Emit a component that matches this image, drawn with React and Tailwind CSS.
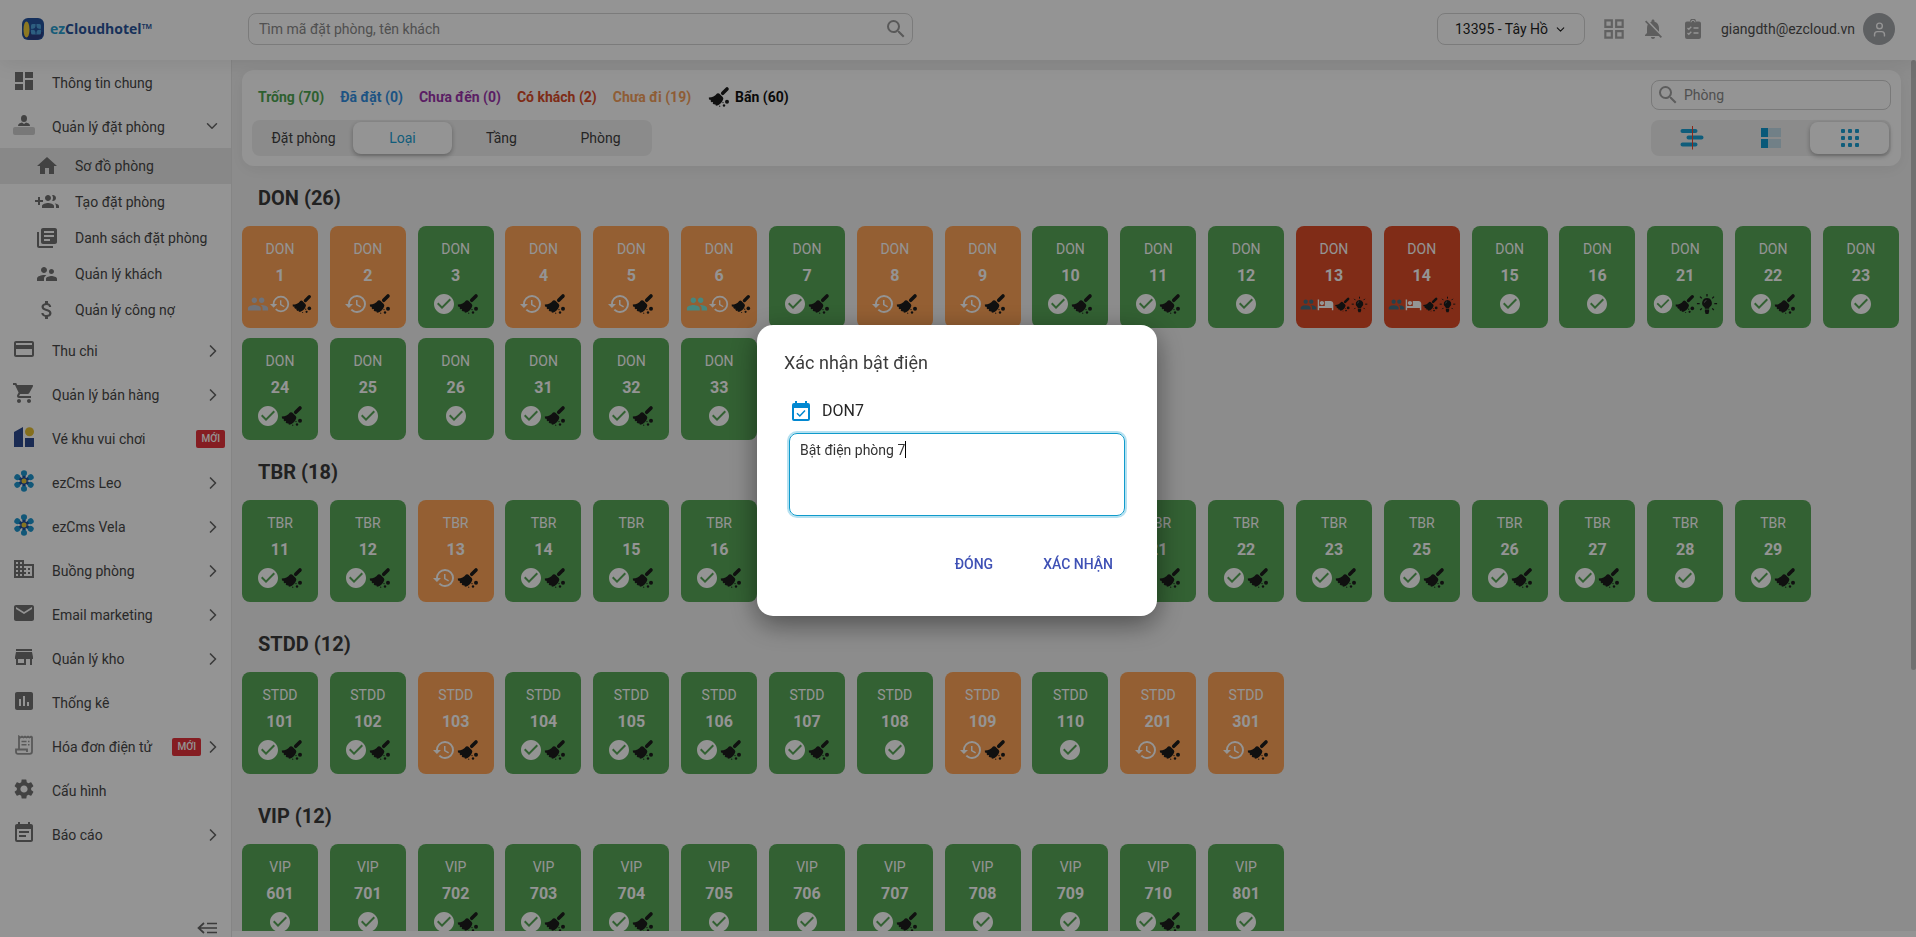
import { useState } from "react";
import {
  MdDashboard,
  MdHome,
  MdLibraryBooks,
  MdSupervisorAccount,
  MdAttachMoney,
  MdCreditCard,
  MdShoppingCart,
  MdBusiness,
  MdEmail,
  MdStore,
  MdAssessment,
  MdSettings,
  MdEventNote,
  MdSearch,
  MdNotificationsOff,
  MdOutlineGridView,
  MdHistory,
  MdCheckCircle,
  MdHotel,
} from "react-icons/md";
import { ChevronDown, ChevronRight, User } from "lucide-react";

function Logo() {
  return (
    <svg width="22" height="22" viewBox="0 0 22 22" aria-hidden="true">
      <rect x="0" y="0" width="22" height="22" rx="6" fill="#25549f" />
      <path d="M2 19C7 23 16 23 20 19L21 14H1z" fill="#2b3f86" />
      <ellipse cx="4.5" cy="11.500" rx="3" ry="8" fill="#f2cf3c" />
      <rect x="9" y="6" width="10" height="10.500" rx="1.500" fill="#4fa3dc" />
      <path d="M14 6v10.500M9 11.300h10" stroke="#25549f" strokeWidth="1" />
      <path d="M14 8l1.200 2.100 2.300 1.200-2.300 1.200L14 14.600l-1.200-2.100-2.300-1.200 2.300-1.200z" fill="#25549f" />
    </svg>
  );
}

function Reception() {
  return (
    <svg width="22" height="22" viewBox="0 0 22 22" aria-hidden="true">
      <ellipse cx="11" cy="4.500" rx="3" ry="3.500" fill="#737373" />
      <path d="M5 12c0-2.500 2-3 4-3.500l2 1.500 2-1.500c2 .5 4 1 4 3.500z" fill="#737373" />
      <rect x="0" y="13" width="22" height="8" rx="2" fill="#cfcfcf" />
    </svg>
  );
}

function GroupAdd() {
  return (
    <svg width="24" height="24" viewBox="0 0 24 24" fill="currentColor" aria-hidden="true">
      <path d="M8 10H5V7H3v3H0v2h3v3h2v-3h3v-2zm10 1c1.660 0 2.990-1.340 2.990-3S19.660 5 18 5c-.32 0-.63.05-.91.14.57.81.9 1.790.9 2.860s-.34 2.040-.9 2.860c.28.09.59.14.91.14zm-5 0c1.660 0 2.990-1.340 2.990-3S14.660 5 13 5c-1.660 0-3 1.340-3 3s1.340 3 3 3zm6.620 2.160c.83.73 1.380 1.660 1.380 2.840v2h3v-2c0-1.540-2.370-2.490-4.380-2.840zM13 13c-2 0-6 1-6 3v2h12v-2c0-2-4-3-6-3z" />
    </svg>
  );
}

function Tickets() {
  return (
    <svg width="20" height="20" viewBox="0 0 20 20" aria-hidden="true">
      <path d="M0 5L9 0v20H0z" fill="#2d4a8f" />
      <rect x="11" y="11" width="9" height="9" fill="#2d4a8f" />
      <circle cx="15.500" cy="4.700" r="4.500" fill="#e5c033" />
    </svg>
  );
}

function Flower() {
  return (
    <svg width="20" height="22" viewBox="0 0 20 22" aria-hidden="true">
      {[0, 60, 120, 180, 240, 300].map((a) => (
        <g key={a} transform={`rotate(${a} 10 11)`}>
          <path d="M10 9L8 5.500A3 3 0 0 1 7 3a3 2.700 0 0 1 6 0 3 3 0 0 1-1 2.500z" fill="#1e96cf" />
          <path d="M10 11L8.300 6.500a2 1.500 0 0 1 3.400 0z" fill="#1f4fa0" />
        </g>
      ))}
      <circle cx="10" cy="11" r="3.700" fill="#1f4fa0" />
      <circle cx="10" cy="11" r="2.500" fill="#e8c93a" />
    </svg>
  );
}

function Receipt() {
  return (
    <svg width="18" height="20" viewBox="0 0 18 20" fill="none" stroke="#9a9a9a" strokeWidth="1.800" aria-hidden="true">
      <path d="M4 13.500V1.500l1.500 1 1.500-1 1.500 1 1.500-1 1.500 1 1.500-1 1.500 1 1.500-1 1 .8V16.500a2.300 2.300 0 0 1-2.300 2.300H3A2 2 0 0 1 1 17v-2.500h11V17" />
      <path d="M6.500 6.500h5M6.500 9.800h5M13 6.500h1.500M13 9.800h1.500" strokeWidth="1.500" />
    </svg>
  );
}

function Broom({ size = 24 }) {
  return (
    <svg width={size} height={size} viewBox="-2 -2 24 24" fill="#1c1c1c" className="shrink-0" aria-hidden="true">
      <path d="M13.700 6.300L18 2" stroke="#1c1c1c" strokeWidth="3.600" strokeLinecap="round" />
      <path d="M8 6.600q1.300-.9 2.500.1l3.200 3.200q1.100 1.200.4 2.600C13.200 15.600 11 17.500 7.700 18.800l-1.500-.8.3-1-1.400.5-1.400-1.100.4-1.300-1.600.2-1-1.400.5-1L0 12.600l-.2-2C3.400 10.600 6 9.400 8 6.600z" />
      <circle cx="18" cy="14.800" r="2" />
      <circle cx="15" cy="18.500" r="1.200" />
      <circle cx="10.700" cy="19.200" r=".6" />
      <circle cx="14" cy="15.600" r=".7" />
    </svg>
  );
}

function Bulb({ size }) {
  return (
    <svg width={size} height={size} viewBox="-1 -1 24 24" fill="#1c1c1c" className="shrink-0" aria-hidden="true">
      <path d="M11 4.500a5.400 5.400 0 0 0-3.300 9.600c.7.600 1 1.200 1 2.100h4.600c0-.9.300-1.500 1-2.100A5.400 5.400 0 0 0 11 4.500z" />
      <path d="M8.700 17h4.600v2.500L12.500 22h-3l-.8-2.500z" />
      <path
        d="M11 0v2.700M3.400 3l1.900 1.900M18.600 3l-1.900 1.900M0 10.500h3M19 10.500h3M3.600 17.500l1.700-1.700M18.400 17.500l-1.700-1.700"
        stroke="#1c1c1c"
        strokeWidth="1.400"
      />
      <path d="M8.200 9.500A2.900 2.900 0 0 1 10.500 7" fill="none" stroke="#8a8a8a" strokeWidth=".8" />
    </svg>
  );
}

function Guests({ size, className }) {
  return (
    <svg width={size} height={size} viewBox="0 0 24 24" fill="currentColor" className={`shrink-0 ${className}`} aria-hidden="true">
      <path d="M16 11c1.660 0 2.990-1.340 2.990-3S17.660 5 16 5s-3 1.340-3 3 1.340 3 3 3zm-8 0c1.660 0 2.990-1.340 2.990-3S9.660 5 8 5 5 6.340 5 8s1.340 3 3 3zm0 2c-2.330 0-7 1.170-7 3.500V19h14v-2.500c0-2.330-4.670-3.500-7-3.500zm8 0c-.29 0-.62.02-.97.05 1.160.84 1.970 1.970 1.970 3.450V19h6v-2.500c0-2.330-4.670-3.500-7-3.500z" />
    </svg>
  );
}

function ClipboardList() {
  return (
    <svg width="16" height="20" viewBox="0 0 16 20" aria-hidden="true">
      <path d="M2 2.500h3a3 3 0 0 1 6 0h3a2 2 0 0 1 2 2V18a2 2 0 0 1-2 2H2a2 2 0 0 1-2-2V4.500a2 2 0 0 1 2-2z" fill="#a3a3a3" />
      <path d="M6 3.300a2 2 0 0 1 4 0" fill="none" stroke="#fff" strokeWidth="1" />
      <path d="M2.500 9l1.300 1.300L6.300 7.800M2.500 14l1.300 1.300 2.500-2.500M8.500 9h5M8.500 14h5" fill="none" stroke="#fff" strokeWidth="1.300" />
    </svg>
  );
}

function TimelineIcon() {
  return (
    <svg width="24" height="24" viewBox="0 0 24 24" aria-hidden="true">
      <path d="M2.500 5h13M8.500 11.500h13M2.500 18.500h13" stroke="#1aa0d4" strokeWidth="4" strokeLinecap="round" />
      <path d="M12.500 0v23.500" stroke="#f0452c" strokeWidth="1" />
    </svg>
  );
}

function SplitIcon() {
  return (
    <svg width="20" height="20" viewBox="0 0 20 20" aria-hidden="true">
      <path d="M0 0h7v9H0zM0 11h7v9H0z" fill="#1199d0" />
      <path d="M7 0h13v9H7zM7 11h13v9H7z" fill="#c3dde8" />
    </svg>
  );
}

function DotsIcon() {
  return (
    <svg width="18" height="18" viewBox="0 0 18 18" fill="#1aa0d4" aria-hidden="true">
      {[0, 7, 14].map((y) => [0, 7, 14].map((x) => <rect key={`${x}-${y}`} x={x} y={y} width="4" height="4" rx="1" />))}
    </svg>
  );
}

function CollapseIcon() {
  return (
    <svg width="20" height="12" viewBox="0 0 20 12" fill="none" stroke="#666" strokeWidth="1.700" aria-hidden="true">
      <path d="M7 1L1.500 6 7 11M2 6h18M10 1.500h10M10 10.500h10" />
    </svg>
  );
}

function CalendarCheck() {
  return (
    <svg width="18" height="20" viewBox="0 0 18 20" aria-hidden="true">
      <path
        d="M3 0h2v2h8V0h2v2h1a2 2 0 0 1 2 2v14a2 2 0 0 1-2 2H2a2 2 0 0 1-2-2V4a2 2 0 0 1 2-2h1zM2 7v11h14V7z"
        fill="#0288d1"
        fillRule="evenodd"
      />
      <path d="M5 12.300l2.800 2.700L13 9.500" fill="none" stroke="#0288d1" strokeWidth="1.500" />
    </svg>
  );
}

const bookingMenu = [
  { label: "Sơ đồ phòng", icon: <MdHome size={24} />, active: true },
  { label: "Tạo đặt phòng", icon: <GroupAdd /> },
  { label: "Danh sách đặt phòng", icon: <MdLibraryBooks size={24} /> },
  { label: "Quản lý khách", icon: <MdSupervisorAccount size={24} /> },
  { label: "Quản lý công nợ", icon: <MdAttachMoney size={24} /> },
];

const mainMenu = [
  { label: "Thu chi", icon: <MdCreditCard size={24} />, arrow: true },
  { label: "Quản lý bán hàng", icon: <MdShoppingCart size={24} />, arrow: true },
  { label: "Vé khu vui chơi", icon: <Tickets />, isNew: true },
  { label: "ezCms Leo", icon: <Flower />, arrow: true },
  { label: "ezCms Vela", icon: <Flower />, arrow: true },
  { label: "Buồng phòng", icon: <MdBusiness size={24} />, arrow: true },
  { label: "Email marketing", icon: <MdEmail size={24} />, arrow: true },
  { label: "Quản lý kho", icon: <MdStore size={24} />, arrow: true },
  { label: "Thống kê", icon: <MdAssessment size={24} /> },
  { label: "Hóa đơn điện tử", icon: <Receipt />, isNew: true, arrow: true },
  { label: "Cấu hình", icon: <MdSettings size={24} /> },
  { label: "Báo cáo", icon: <MdEventNote size={24} />, arrow: true },
];

const statuses = [
  { label: "Trống (70)", color: "text-[#4fa552]" },
  { label: "Đã đặt (0)", color: "text-[#3290e2]" },
  { label: "Chưa đến (0)", color: "text-[#9c35ac]" },
  { label: "Có khách (2)", color: "text-[#d94a28]" },
  { label: "Chưa đi (19)", color: "text-[#f5a05c]" },
];

// c: clean, d: dirty, o: overdue, g/t/s: guests (grey, teal, slate), b: in bed, l: light on
const groups = [
  {
    name: "DON",
    total: 26,
    rooms:
      "1:god 2:od 3:cd 4:od 5:od 6:tod 7:cd 8:od 9:od 10:cd 11:cd 12:c 13:sbdl 14:sbdl 15:c 16:c 21:cdl 22:cd 23:c 24:cd 25:c 26:c 31:cd 32:cd 33:c 34:c",
  },
  {
    name: "TBR",
    total: 18,
    rooms: "11:cd 12:cd 13:od 14:cd 15:cd 16:cd 17:cd 18:cd 19:cd 20:cd 21:cd 22:cd 23:cd 25:cd 26:cd 27:cd 28:c 29:cd",
  },
  {
    name: "STDD",
    total: 12,
    rooms: "101:cd 102:cd 103:od 104:cd 105:cd 106:cd 107:cd 108:c 109:od 110:c 201:od 301:od",
  },
  {
    name: "VIP",
    total: 12,
    rooms: "601:c 701:c 702:cd 703:cd 704:cd 705:c 706:c 707:cd 708:c 709:c 710:cd 801:c",
  },
];

const iconSizes = { 1: 24, 2: 24, 3: 22, 4: 17 };

function NewBadge() {
  return <span className="rounded-xs bg-[#e5323c] px-[5px] text-[10px] leading-[18px] font-medium text-white">MỚI</span>;
}

function RoomIcon({ code, size }) {
  switch (code) {
    case "c":
      return <MdCheckCircle size={size} className="shrink-0 text-white" />;
    case "d":
      return <Broom size={size} />;
    case "o":
      return <MdHistory size={size} className="shrink-0 text-white" />;
    case "g":
      return <Guests size={size} className="text-[#c0c4d0]" />;
    case "t":
      return <Guests size={size} className="text-[#7be8da]" />;
    case "s":
      return <Guests size={size} className="text-[#466f80]" />;
    case "b":
      return <MdHotel size={size} className="shrink-0 text-white" />;
    default:
      return <Bulb size={size} />;
  }
}

function RoomCard({ type, room }) {
  const [number, codes] = room.split(":");
  let tone = "bg-[#58a758]";
  if (codes.includes("o")) tone = "bg-[#ffa458]";
  if (codes.includes("b")) tone = "bg-[#dd4c28]";

  return (
    <button type="button" className={`flex h-[102px] flex-col items-center rounded-lg pt-3 text-white ${tone}`}>
      <span className="text-sm leading-[22px]">{type}</span>
      <span className="mt-1 text-base leading-6 font-bold">{number}</span>
      <span className="mt-0.5 flex h-7 items-center">
        {codes.split("").map((code) => (
          <RoomIcon key={code} code={code} size={iconSizes[codes.length]} />
        ))}
      </span>
    </button>
  );
}

function Header() {
  return (
    <header className="relative z-10 flex h-[60px] shrink-0 items-center bg-white pr-[21px] pb-0.5 pl-[22px] shadow-[0_4px_20px_rgba(0,0,0,0.08)]">
      <a href="#" className="flex w-[226px] shrink-0 items-center gap-1.5">
        <Logo />
        <span className="font-['Open_Sans',sans-serif] text-[14px] leading-5 font-bold text-[#2a559c]">
          <span className="text-[#2a9fd0]">ez</span>Cloudhotel™
        </span>
      </a>
      <label className="flex h-8 w-[665px] items-center rounded-lg border border-[#d5d5d5] pr-1 pl-2.5">
        <input
          type="text"
          placeholder="Tìm mã đặt phòng, tên khách"
          className="min-w-0 flex-1 text-sm outline-none placeholder:text-[#8a8a8a]"
        />
        <MdSearch size={24} className="text-[#9a9a9a]" />
      </label>
      <div className="ml-auto flex items-center">
        <button type="button" className="flex h-8 w-[148px] items-center justify-center gap-1.5 rounded-lg border border-[#d5d5d5] text-sm text-[#1f1f1f]">
          13395 - Tây Hồ
          <ChevronDown size={13} />
        </button>
        <button type="button" aria-label="Ứng dụng" className="ml-4">
          <MdOutlineGridView size={26} className="text-[#a8a8a8]" />
        </button>
        <button type="button" aria-label="Thông báo" className="ml-3.5">
          <MdNotificationsOff size={24} className="text-[#a3a3a3]" />
        </button>
        <button type="button" aria-label="Công việc" className="ml-5">
          <ClipboardList />
        </button>
        <span className="ml-5 text-sm text-[#505050]">giangdth@ezcloud.vn</span>
        <button type="button" aria-label="Tài khoản" className="ml-2 flex size-8 items-center justify-center rounded-full bg-[#a3a5aa] text-white">
          <User size={17} />
        </button>
      </div>
    </header>
  );
}

function Sidebar() {
  return (
    <nav className="flex w-[232px] shrink-0 flex-col border-r border-[#e5e5e5] bg-white text-sm text-[#484848]">
      <a href="#" className="flex h-11 items-center pb-0.5 pl-3">
        <MdDashboard size={24} className="text-[#737373]" />
        <span className="ml-4 pt-1">Thông tin chung</span>
      </a>
      <a href="#" className="flex h-11 items-center pr-2.5 pb-0.5 pl-3">
        <span className="flex w-6 justify-center">
          <Reception />
        </span>
        <span className="ml-4 flex-1 pt-1">Quản lý đặt phòng</span>
        <ChevronDown size={18} className="mt-0.5 text-[#666]" />
      </a>
      {bookingMenu.map((item) => (
        <a key={item.label} href="#" className={`flex h-9 items-center pl-[35px] ${item.active ? "bg-[#ebebeb]" : ""}`}>
          <span className="text-[#737373]">{item.icon}</span>
          <span className="ml-4">{item.label}</span>
        </a>
      ))}
      {mainMenu.map((item) => (
        <a key={item.label} href="#" className="flex h-11 items-center pr-1.5 pl-3">
          <span className="flex w-6 justify-center pb-0.5 text-[#737373]">{item.icon}</span>
          <span className="ml-4 flex-1 pt-0.5">{item.label}</span>
          <span className="flex items-center gap-0.5 pt-0.5">
            {item.isNew && <NewBadge />}
            {item.arrow && <ChevronRight size={20} className="mr-0.5 text-[#666]" />}
          </span>
        </a>
      ))}
      <button type="button" aria-label="Thu gọn" className="mt-auto mr-3.5 mb-[3px] self-end">
        <CollapseIcon />
      </button>
    </nav>
  );
}

function Toolbar() {
  const [tab, setTab] = useState("Loại");
  const [view, setView] = useState("grid");
  const views = [
    { id: "timeline", icon: <TimelineIcon /> },
    { id: "split", icon: <SplitIcon /> },
    { id: "grid", icon: <DotsIcon /> },
  ];
  const selected = "bg-white shadow-[0_2px_5px_rgba(0,0,0,0.3)]";

  return (
    <section className="flex justify-between rounded-xl bg-white p-2.5 shadow-[0_4px_16px_rgba(0,0,0,0.06)]">
      <div>
        <div className="flex h-[34px] items-center gap-4 pl-1.5 text-sm font-bold">
          {statuses.map((s) => (
            <span key={s.label} className={s.color}>
              {s.label}
            </span>
          ))}
          <span className="flex items-center gap-1 text-[#111]">
            <Broom />
            Bẩn (60)
          </span>
        </div>
        <div className="mt-1.5 flex w-fit rounded-lg bg-[#f0f0f0] p-0.5 text-sm text-[#404040]">
          {["Đặt phòng", "Loại", "Tầng", "Phòng"].map((t) => (
            <button
              key={t}
              type="button"
              onClick={() => setTab(t)}
              className={`h-8 w-[99px] rounded-lg ${t === tab ? `text-[#1aa0d4] ${selected}` : ""}`}
            >
              {t}
            </button>
          ))}
        </div>
      </div>
      <div className="w-60">
        <label className="flex h-[30px] items-center gap-1 rounded-lg border border-[#d0d0d0] pl-1">
          <MdSearch size={24} className="text-[#a0a0a0]" />
          <input type="text" placeholder="Phòng" className="min-w-0 flex-1 text-sm outline-none placeholder:text-[#8a8a8a]" />
        </label>
        <div className="mt-2.5 flex rounded-lg bg-[#f0f0f0] p-0.5">
          {views.map((v) => (
            <button
              key={v.id}
              type="button"
              aria-label={v.id}
              onClick={() => setView(v.id)}
              className={`flex h-8 flex-1 items-center justify-center rounded-lg ${v.id === view ? selected : ""}`}
            >
              {v.icon}
            </button>
          ))}
        </div>
      </div>
    </section>
  );
}

function ConfirmDialog() {
  return (
    <div className="fixed inset-0 z-20 flex items-center justify-center bg-black/42 pt-1 pr-0.5">
      <div
        role="dialog"
        aria-labelledby="dialog-title"
        className="w-[400px] rounded-2xl bg-white px-[27px] pt-6 pb-[34px] shadow-[0_8px_28px_rgba(0,0,0,0.45)]"
      >
        <h2 id="dialog-title" className="text-lg leading-7 text-[#3c3c3c]">
          Xác nhận bật điện
        </h2>
        <div className="mt-[22px] flex items-center gap-3 pl-2">
          <CalendarCheck />
          <label htmlFor="note" className="text-base leading-6 text-[#262626]">
            DON7
          </label>
        </div>
        <div className="relative mx-[5px] mt-2.5">
          <textarea
            id="note"
            defaultValue="Bật điện phòng 7"
            className="block h-[83px] w-full resize-none rounded-lg border border-[#109bcb] px-2.5 py-1.5 text-sm leading-5 text-[#333] ring-2 ring-[#b5e1f1] outline-none"
          />
          <span className="pointer-events-none absolute top-2 left-[116px] h-[17px] w-px bg-black" />
        </div>
        <div className="mt-[30px] flex justify-end gap-4 text-sm font-medium text-[#3f51b5]">
          <button type="button" className="h-9 px-[17px]">
            ĐÓNG
          </button>
          <button type="button" className="h-9 px-[17px]">
            XÁC NHẬN
          </button>
        </div>
      </div>
    </div>
  );
}

export default function App() {
  return (
    <div className="flex h-screen flex-col overflow-hidden bg-white font-[Roboto,sans-serif]">
      <Header />
      <div className="flex min-h-0 flex-1">
        <Sidebar />
        <div className="flex min-w-0 flex-1 pb-1.5">
          <main className="min-w-0 flex-1 overflow-hidden bg-[#f2f2f2] px-2.5 pt-2.5">
            <Toolbar />
            <div className="pr-0.5">
              {groups.map((g) => (
                <section key={g.name} className="mb-2.5 first:mb-0">
                  <h2 className="flex h-[60px] items-center pt-1 pl-4 text-xl font-bold text-[#3a3a3a]">
                    {g.name} ({g.total})
                  </h2>
                  <div className="grid grid-cols-[repeat(auto-fill,76px)] justify-between gap-x-[11px] gap-y-2.5">
                    {g.rooms.split(" ").map((room) => (
                      <RoomCard key={room} type={g.name} room={room} />
                    ))}
                  </div>
                </section>
              ))}
            </div>
          </main>
          <div className="w-[5px] shrink-0 bg-[#f2f2f2]">
            <div className="h-[70%] rounded-full bg-[#c1c1c1]" />
          </div>
        </div>
      </div>
      <ConfirmDialog />
    </div>
  );
}
